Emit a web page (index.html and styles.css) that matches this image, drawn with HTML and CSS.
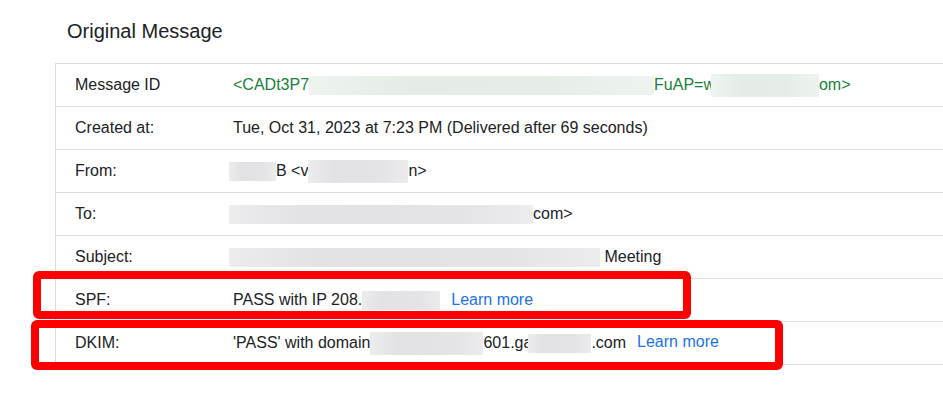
FILE: index.html
```html
<!DOCTYPE html>
<html lang="en">
<head>
  <meta charset="UTF-8">
  <title>Original Message</title>
  <meta name="viewport" content="width=device-width, initial-scale=1.0">
  <link rel="stylesheet" href="styles.css">
</head>
<body>
  <div class="page">
    <h1 class="title">Original Message</h1>

    <div class="details">
      <div class="row">
        <div class="label">Message ID</div>
        <div class="value green">&lt;CADt3P7<span class="blur blur-green w345"></span>FuAP=w<span class="blur blur-green tall pull w108"></span>om&gt;</div>
      </div>
      <div class="row">
        <div class="label">Created at:</div>
        <div class="value">Tue, Oct 31, 2023 at 7:23 PM (Delivered after 69 seconds)</div>
      </div>
      <div class="row">
        <div class="label">From:</div>
        <div class="value"><span class="blur pull w47"></span>B &lt;v<span class="blur tall w100"></span>n&gt;</div>
      </div>
      <div class="row">
        <div class="label">To:</div>
        <div class="value"><span class="blur pull w304"></span>com&gt;</div>
      </div>
      <div class="row">
        <div class="label">Subject:</div>
        <div class="value"><span class="blur pull w371"></span> Meeting</div>
      </div>
      <div class="row">
        <div class="label">SPF:</div>
        <div class="value">PASS with IP 208.<span class="blur w78"></span><a class="link" href="#">Learn more</a></div>
      </div>
      <div class="row">
        <div class="label">DKIM:</div>
        <div class="value">'PASS' with domain<span class="blur tall w113"></span>601.ga<span class="blur pull w63"></span>.com<a class="link" href="#">Learn more</a></div>
      </div>

      <!-- annotation boxes -->
      <div class="mark mark-spf"></div>
      <div class="mark mark-dkim"></div>
    </div>
  </div>
</body>
</html>
```

FILE: styles.css
```css
body {
  margin: 0;
  background: #fff;
  color: #202124;
  font-family: 'Liberation Sans', Arial, sans-serif;
}
.page {
  padding-left: 55px;
  padding-bottom: 20px;
}
.title {
  margin: 0 0 20px 12px;
  padding-top: 19px;
  font-size: 20px;
  font-weight: normal;
  line-height: 24px;
}
.details {
  position: relative;
  width: 888px;
  border-top: 1px solid #dadce0;
  border-left: 1px solid #dadce0;
}
.row {
  display: flex;
  align-items: center;
  height: 42px;
  border-bottom: 1px solid #dadce0;
  font-size: 16px;
  white-space: nowrap;
}
.label {
  width: 158px;
  padding-left: 19px;
  flex: none;
}
.value {
  line-height: 20px;
}
.green { color: #188038; }
.link {
  color: #1a73e8;
  text-decoration: none;
  margin-left: 11px;
}
.blur {
  display: inline-block;
  height: 19px;
  vertical-align: middle;
  background: linear-gradient(90deg, #ececee, #e2e2e4 25%, #e4e4e6 75%, #ececee);
}
.blur.tall { height: 23px; }
.blur.pull { margin-left: -4px; }
.blur-green {
  background: linear-gradient(90deg, #eef3ef, #e4ece5 30%, #e6ede7 70%, #eef3ef);
}
.w47 { width: 47px; }
.w63 { width: 63px; }
.w78 { width: 78px; }
.w100 { width: 100px; }
.w108 { width: 108px; }
.w113 { width: 113px; }
.w304 { width: 304px; }
.w345 { width: 345px; }
.w371 { width: 371px; }
.mark {
  position: absolute;
  border: 8px solid #ff0000;
  border-radius: 6px;
  box-sizing: border-box;
}
.mark-spf {
  left: -23px;
  top: 207px;
  width: 658px;
  height: 48px;
}
.mark-dkim {
  left: -25px;
  top: 256px;
  width: 752px;
  height: 50px;
}
```
